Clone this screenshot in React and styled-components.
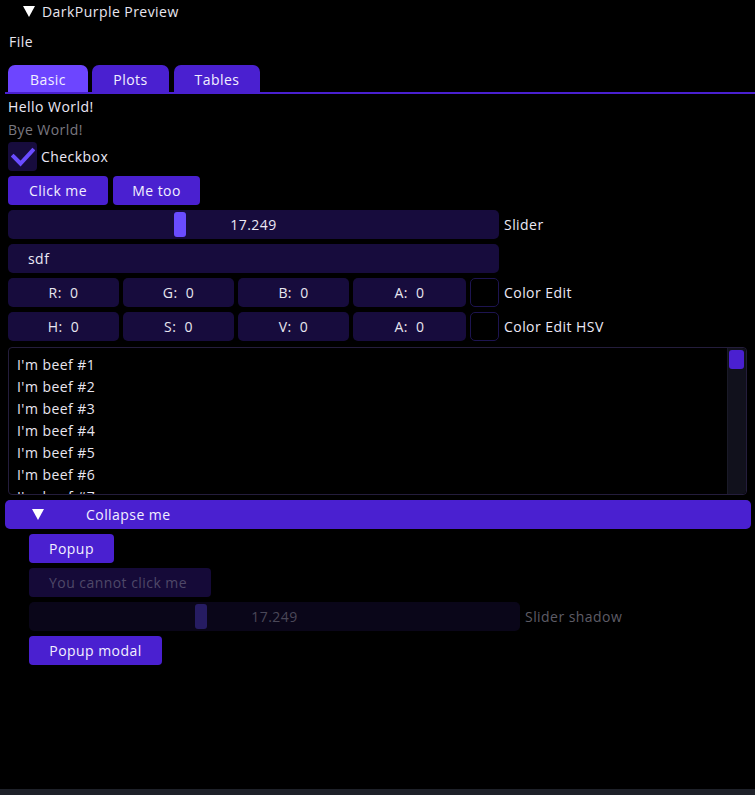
import React from "react";
import styled, { createGlobalStyle } from "styled-components";

const Global = createGlobalStyle`
  html, body { margin: 0; padding: 0; background: #000; }
  body {
    font-family: "Open Sans", "Lato", "Noto Sans", sans-serif;
    font-size: 14px;
    letter-spacing: 0.45px;
    color: #e8e6f0;
    height: 795px;
    overflow: hidden;
  }
`;

const Page = styled.div`
  width: 755px;
  height: 795px;
  display: flex;
  flex-direction: column;
  background: #000;
`;

const TitleRow = styled.div`
  height: 22px;
  display: flex;
  align-items: center;
  padding-left: 23px;
  gap: 7px;
`;

const Tri = styled.span`
  display: inline-block;
  width: 0;
  height: 0;
  border-left: 6px solid transparent;
  border-right: 6px solid transparent;
  border-top: 11px solid #fff;
`;

const MenuBar = styled.div`
  height: 20px;
  margin-top: 9px;
  padding-left: 9px;
  display: flex;
  align-items: center;
`;

const TabBar = styled.div`
  margin-top: 14px;
  display: flex;
  align-items: flex-end;
  gap: 4px;
  margin-left: 5px;
  padding-left: 3px;
  border-bottom: 2px solid #4a20d0;
  height: 27px;
`;

const Tab = styled.div`
  height: 27px;
  box-sizing: border-box;
  display: flex;
  align-items: center;
  justify-content: center;
  padding-top: 1px;
  width: ${(p) => p.$w}px;
  border-radius: 7px 7px 0 0;
  background: ${(p) => (p.$active ? "#6d45ff" : "#4a20d0")};
  color: #f2f0ff;
`;

const Content = styled.div`
  display: flex;
  flex-direction: column;
  gap: 5px;
  padding: 4px 0 0 8px;
`;

const Text = styled.div`
  height: 18px;
  line-height: 18px;
  color: ${(p) => (p.$dim ? "#7a7880" : "#ece9f5")};
  margin-bottom: ${(p) => (p.$tight ? "-2px" : "0")};
`;

const Row = styled.div`
  display: flex;
  align-items: center;
  gap: ${(p) => p.$gap ?? 5}px;
`;

const CheckBox = styled.div`
  width: 29px;
  height: 29px;
  border-radius: 4px;
  background: #170c3d;
  display: flex;
  align-items: center;
  justify-content: center;
`;

const Button = styled.div`
  height: 29px;
  box-sizing: border-box;
  padding: 0 20px;
  width: ${(p) => (p.$w ? p.$w + "px" : "auto")};
  border-radius: 4px;
  display: flex;
  align-items: center;
  justify-content: ${(p) => (p.$left ? "flex-start" : "center")};
  background: ${(p) => (p.$disabled ? "#150a38" : "#4a20d0")};
  color: ${(p) => (p.$disabled ? "#4f4868" : "#f2f0ff")};
  white-space: nowrap;
`;

const Frame = styled.div`
  position: relative;
  width: 491px;
  height: 29px;
  box-sizing: border-box;
  border-radius: 5px;
  background: ${(p) => (p.$shadow ? "#0a0619" : "#170c3d")};
  color: ${(p) => (p.$shadow ? "#4a4858" : "#ece9f5")};
  display: flex;
  align-items: center;
  justify-content: ${(p) => (p.$left ? "flex-start" : "center")};
  padding: ${(p) => (p.$left ? "0 20px" : "0")};
`;

const Grab = styled.div`
  position: absolute;
  left: 166px;
  top: 2px;
  width: 12px;
  height: 25px;
  border-radius: 3px;
  background: ${(p) => (p.$shadow ? "#261c62" : "#6a4cff")};
`;

const Label = styled.span`
  color: ${(p) => (p.$dim ? "#5e5c66" : "#ece9f5")};
  white-space: nowrap;
`;

const ColorGrid = styled.div`
  width: 491px;
  display: grid;
  grid-template-columns: 111px 111px 111px 113px 29px;
  gap: 4px;
`;

const ColorBox = styled.div`
  height: 29px;
  border-radius: 5px;
  background: #170c3d;
  display: flex;
  align-items: center;
  justify-content: center;
  white-space: pre;
`;

const Swatch = styled.div`
  height: 29px;
  box-sizing: border-box;
  border-radius: 5px;
  background: #000;
  border: 1px solid #1d1450;
`;

const ListBox = styled.div`
  width: 739px;
  height: 148px;
  box-sizing: border-box;
  border: 1px solid #241d3c;
  border-radius: 4px;
  display: flex;
  overflow: hidden;
  margin-top: 1px;
`;

const ListItems = styled.div`
  flex: 1;
  padding: 6px 0 0 8px;
  display: flex;
  flex-direction: column;
  border-right: 1px solid #1a1a28;
  overflow: hidden;
`;

const ListItem = styled.div`
  height: 22px;
  line-height: 22px;
  flex-shrink: 0;
`;

const ScrollTrack = styled.div`
  width: 18px;
  background: #11111c;
  border-radius: 0 4px 4px 0;
  padding: 2px 2px 0 1px;
  box-sizing: border-box;
`;

const ScrollGrab = styled.div`
  height: 19px;
  border-radius: 3px;
  background: #4a20d0;
`;

const Header = styled.div`
  margin: 0 0 0 -3px;
  width: 746px;
  height: 29px;
  border-radius: 5px;
  background: #4a20d0;
  display: flex;
  align-items: center;
  padding-left: 27px;
  box-sizing: border-box;
  gap: 42px;
  color: #f2f0ff;
`;

const Indented = styled.div`
  display: flex;
  flex-direction: column;
  gap: 5px;
  padding-left: 21px;
`;

const BottomBar = styled.div`
  margin-top: auto;
  height: 6px;
  background: #1e2129;
`;

const Check = () => (
  <svg width="24" height="20" viewBox="0 0 24 20">
    <path d="M2.5 9.5 L9.5 16.5 L21.5 3.5" stroke="#6a4cff" strokeWidth="4" fill="none" strokeLinecap="square" />
  </svg>
);

const beefs = [1, 2, 3, 4, 5, 6, 7];

export default function App() {
  return (
    <Page>
      <Global />
      <TitleRow>
        <Tri />
        <span>DarkPurple Preview</span>
      </TitleRow>
      <MenuBar>File</MenuBar>
      <TabBar>
        <Tab $active $w={80}>Basic</Tab>
        <Tab $w={77}>Plots</Tab>
        <Tab $w={86} style={{ marginLeft: 1 }}>Tables</Tab>
      </TabBar>
      <Content>
        <Text>Hello World!</Text>
        <Text $dim $tight>Bye World!</Text>
        <Row $gap={4}>
          <CheckBox><Check /></CheckBox>
          <Label>Checkbox</Label>
        </Row>
        <Row>
          <Button $w={100}>Click me</Button>
          <Button $w={87}>Me too</Button>
        </Row>
        <Row>
          <Frame>
            <Grab />
            17.249
          </Frame>
          <Label>Slider</Label>
        </Row>
        <Frame $left>sdf</Frame>
        <Row>
          <ColorGrid>
            <ColorBox>R:  0</ColorBox>
            <ColorBox>G:  0</ColorBox>
            <ColorBox>B:  0</ColorBox>
            <ColorBox>A:  0</ColorBox>
            <Swatch />
          </ColorGrid>
          <Label>Color Edit</Label>
        </Row>
        <Row>
          <ColorGrid>
            <ColorBox>H:  0</ColorBox>
            <ColorBox>S:  0</ColorBox>
            <ColorBox>V:  0</ColorBox>
            <ColorBox>A:  0</ColorBox>
            <Swatch />
          </ColorGrid>
          <Label>Color Edit HSV</Label>
        </Row>
        <ListBox>
          <ListItems>
            {beefs.map((n) => (
              <ListItem key={n}>I'm beef #{n}</ListItem>
            ))}
          </ListItems>
          <ScrollTrack>
            <ScrollGrab />
          </ScrollTrack>
        </ListBox>
        <Header>
          <Tri />
          <span>Collapse me</span>
        </Header>
        <Indented>
          <Button $w={85}>Popup</Button>
          <Button $w={182} $disabled $left>You cannot click me</Button>
          <Row>
            <Frame $shadow>
              <Grab $shadow />
              17.249
            </Frame>
            <Label $dim>Slider shadow</Label>
          </Row>
          <Button $w={133}>Popup modal</Button>
        </Indented>
      </Content>
      <BottomBar />
    </Page>
  );
}
